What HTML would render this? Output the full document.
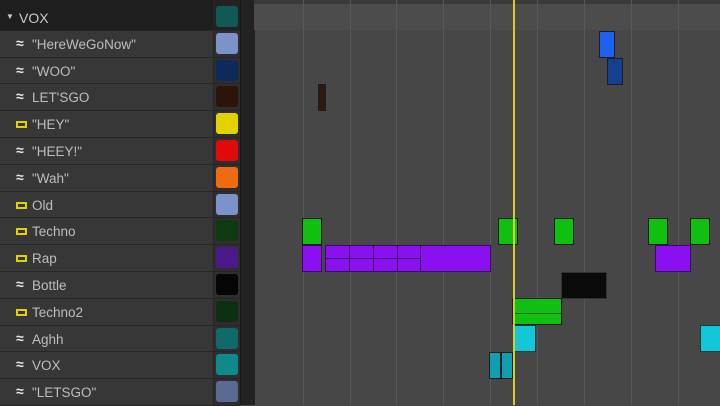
<!DOCTYPE html><html><head><style>
body{margin:0;width:720px;height:405px;overflow:hidden;background:#474747;font-family:"Liberation Sans",sans-serif;position:relative}
.l{position:absolute;left:0;top:0;width:240px;height:405px;background:#353535}
.r{position:absolute;left:0;width:240px;height:26.8px;border-bottom:1px solid #262626;box-sizing:border-box;background:#373737}
.r .t{position:absolute;left:32px;top:6px;font-size:13.5px;color:#bdbdbd}
.r .i{position:absolute;left:16px;top:4px;font-size:14px;font-weight:bold;color:#e6e6e6}
.r .m{position:absolute;left:16px;top:10px;width:11px;height:7px;border:2px solid #e2d300;box-sizing:border-box}
.r .sw{position:absolute;left:213px;top:0;width:27px;height:100%;background:#2e2e2e;border-left:1px solid #262626}
.r .sw i{position:absolute;left:2px;top:2px;width:22px;height:21px;border-radius:3px}
.sb{position:absolute;left:240px;top:0;width:14px;height:405px;background:#222;border-left:1px solid #1a1a1a}
.g{position:absolute;top:0;width:1px;height:405px;background:#585858}
.c{position:absolute;box-sizing:border-box;border:1px solid #1d1d1d}
</style></head><body>
<div class="l"></div>
<div class="r" style="top:0;height:30.8px;background:#1e1e1e"><span class="t" style="left:19px;top:10px;font-size:14px;color:#c8c8c8">VOX</span><span style="position:absolute;left:6px;top:12px;font-size:8px;color:#ccc">▼</span><div class="sw" style="background:#222"><i style="background:#0f5a55;top:6px"></i></div></div>
<div id="rows"></div>
<div class="sb"></div>
<div style="position:absolute;left:254px;top:0;width:466px;height:30px;background:#4c4c4c"></div>
<div style="position:absolute;left:254px;top:0;width:466px;height:4px;background:#3a3a3a"></div>
<div class="g" style="left:303px"></div><div class="g" style="left:350px"></div><div class="g" style="left:396px"></div><div class="g" style="left:443px"></div><div class="g" style="left:490px"></div><div class="g" style="left:537px"></div><div class="g" style="left:584px"></div><div class="g" style="left:631px"></div><div class="g" style="left:678px"></div>
<div class="c" style="left:318px;top:84px;width:8px;height:27px;background:#2c1a10"></div>
<div class="c" style="left:599px;top:31px;width:16px;height:27px;background:#1e60f0"></div>
<div class="c" style="left:607px;top:58px;width:16px;height:27px;background:#144090"></div>
<div class="c" style="left:302px;top:218px;width:20px;height:27px;background:#10c010"></div>
<div class="c" style="left:498px;top:218px;width:20px;height:27px;background:#10c010"></div>
<div class="c" style="left:554px;top:218px;width:20px;height:27px;background:#10c010"></div>
<div class="c" style="left:648px;top:218px;width:20px;height:27px;background:#10c010"></div>
<div class="c" style="left:690px;top:218px;width:20px;height:27px;background:#10c010"></div>
<div class="c" style="left:302px;top:245px;width:20px;height:27px;background:#8a10f0;border-color:#3a0a60"></div>
<div class="c" style="left:325px;top:245px;width:166px;height:27px;background:#8a10f0;border-color:#3a0a60"></div>
<div style="position:absolute;left:326px;top:258px;width:94px;height:1px;background:#3a0a60"></div>
<div style="position:absolute;left:349px;top:246px;width:1px;height:25px;background:#3a0a60"></div>
<div style="position:absolute;left:373px;top:246px;width:1px;height:25px;background:#3a0a60"></div>
<div style="position:absolute;left:397px;top:246px;width:1px;height:25px;background:#3a0a60"></div>
<div style="position:absolute;left:420px;top:246px;width:1px;height:25px;background:#3a0a60"></div>
<div class="c" style="left:655px;top:245px;width:36px;height:27px;background:#8a10f0;border-color:#3a0a60"></div>
<div class="c" style="left:561px;top:272px;width:46px;height:27px;background:#0a0a0a;border-color:#333"></div>
<div class="c" style="left:512px;top:298px;width:50px;height:27px;background:#10c010"></div>
<div style="position:absolute;left:513px;top:313px;width:48px;height:1px;background:#0a5a0a"></div>
<div class="c" style="left:513px;top:325px;width:23px;height:27px;background:#12c8d8;border-color:#0a4040"></div>
<div class="c" style="left:700px;top:325px;width:22px;height:27px;background:#12c8d8;border-color:#0a4040"></div>
<div class="c" style="left:489px;top:352px;width:12px;height:27px;background:#0ea0b0"></div>
<div class="c" style="left:501px;top:352px;width:12px;height:27px;background:#0ea0b0"></div>
<div style="position:absolute;left:513px;top:0;width:2px;height:405px;background:#d8d020"></div>
<script>
var d=[["≈",'"HereWeGoNow"',"#7b93c8"],["≈",'"WOO"',"#0d2a5a"],["≈","LET'SGO","#2c1408"],["m",'"HEY"',"#e2d300"],["≈",'"HEEY!"',"#e00a0a"],["≈",'"Wah"',"#f06a10"],["m","Old","#7b93c8"],["m","Techno","#0e3a12"],["m","Rap","#4a1a8a"],["≈","Bottle","#050505"],["m","Techno2","#0e3012"],["≈","Aghh","#0f6a6a"],["≈","VOX","#0f8a8a"],["≈",'"LETSGO"',"#5a6a90"]];
var h="";d.forEach(function(x,i){var t=30.8+i*26.8;h+='<div class="r" style="top:'+t+'px">'+(x[0]=="m"?'<span class="m"></span>':'<span class="i">≈</span>')+'<span class="t">'+x[1]+'</span><div class="sw"><i style="background:'+x[2]+'"></i></div></div>';});
document.getElementById("rows").innerHTML=h;
</script>
</body></html>
